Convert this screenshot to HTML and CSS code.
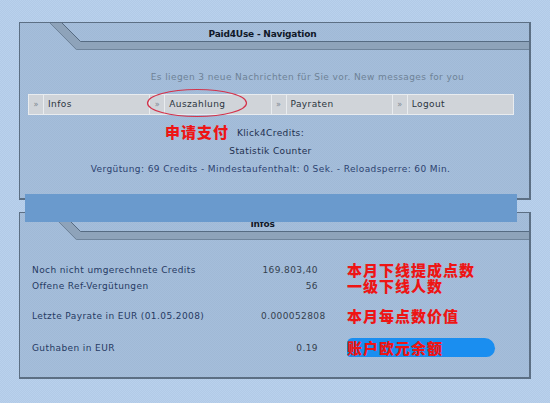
FILE: index.html
```html
<!DOCTYPE html>
<html lang="de">
<head>
    <meta charset="UTF-8">
    <title>Paid4Use - Navigation</title>
    <link rel="stylesheet" href="styles.css">
</head>
<body>

<div class="page">

    <div class="panel">
        <div class="panel-head">
            <svg class="head-slant" width="66" height="27" viewBox="0 0 66 27">
                <polygon points="30,0 42,0 60,18 66,18 66,27 56,27" fill="#8ea3ba"/>
                <polyline points="42,0 60.5,18.5 66,18.5" fill="none" stroke="#566b82"/>
                <polyline points="30,0 56.5,26.5 66,26.5" fill="none" stroke="#6f849b"/>
            </svg>
            <div class="head-main">
                <div class="head-title">Paid4Use - Navigation</div>
                <div class="head-band"></div>
            </div>
        </div>
        <div class="nav-body">
            <p class="msg">Es liegen 3 neue Nachrichten für Sie vor. New messages for you</p>
            <div class="nav">
                <div class="nav-item"><span class="nav-arrow">»</span><span class="nav-label">Infos</span></div>
                <div class="nav-item"><span class="nav-arrow">»</span><span class="nav-label">Auszahlung</span></div>
                <div class="nav-item"><span class="nav-arrow">»</span><span class="nav-label">Payraten</span></div>
                <div class="nav-item"><span class="nav-arrow">»</span><span class="nav-label">Logout</span></div>
            </div>
            <div class="stats">
                <div>Klick4Credits:</div>
                <div>Statistik Counter</div>
                <div class="stats-rule">Vergütung: 69 Credits - Mindestaufenthalt: 0 Sek. - Reloadsperre: 60 Min.</div>
            </div>
        </div>
    </div>

    <div class="panel panel-infos">
        <div class="panel-head">
            <svg class="head-slant" width="66" height="27" viewBox="0 0 66 27">
                <polygon points="30,0 42,0 60,18 66,18 66,27 56,27" fill="#8ea3ba"/>
                <polyline points="42,0 60.5,18.5 66,18.5" fill="none" stroke="#566b82"/>
                <polyline points="30,0 56.5,26.5 66,26.5" fill="none" stroke="#6f849b"/>
            </svg>
            <div class="head-main">
                <div class="head-title">Infos</div>
                <div class="head-band"></div>
            </div>
        </div>
        <div class="info-body">
            <span class="info-label">Noch nicht umgerechnete Credits</span>
            <span class="info-value">169.803,40</span>
            <span class="note note-pair">本月下线提成点数<br>一级下线人数</span>

            <span class="info-label">Offene Ref-Vergütungen</span>
            <span class="info-value">56</span>

            <span class="info-label row-end">Letzte Payrate in EUR (01.05.2008)</span>
            <span class="info-value row-end">0.000052808</span>
            <span class="note row-end">本月每点数价值</span>

            <span class="info-label row-end">Guthaben in EUR</span>
            <span class="info-value row-end">0.19</span>
            <span class="note row-end"><span class="note-brush">账户欧元余额</span></span>
        </div>
    </div>

    <!-- paint-over marks on the screenshot -->
    <svg class="circle-mark" width="104" height="32" viewBox="0 0 104 32">
        <ellipse cx="51" cy="15" rx="49.5" ry="13.5" fill="none" stroke="#d4324a" stroke-width="1.2"/>
    </svg>
    <div class="note note-pay">申请支付</div>
    <div class="cover-bar"></div>

</div>

</body>
</html>
```

FILE: styles.css
```css
body {
    margin: 0;
    background: #b9d1ed repeating-conic-gradient(#b2cae6 0 25%, transparent 0 50%) 0 0 / 2px 2px;
    font-family: "DejaVu Sans", Verdana, sans-serif;
    font-size: 9px;
    letter-spacing: 0.4px;
    color: #26395e;
}

.page {
    position: relative;
    width: 550px;
    height: 403px;
    padding: 22px 0 0 19px;
    box-sizing: border-box;
}

.panel {
    width: 509px;
    background: #a5bedb repeating-conic-gradient(#a0b9d6 0 25%, transparent 0 50%) 0 0 / 2px 2px;
    border: 1px solid #5c6f84;
    border-right-width: 2px;
    border-bottom-width: 2px;
}

.panel-infos {
    margin-top: 12px;
}

.panel-head {
    display: flex;
    height: 27px;
}

.head-slant {
    display: block;
    flex: none;
}

.head-main {
    flex: 1;
    display: flex;
    flex-direction: column;
}

.head-title {
    height: 18px;
    line-height: 23px;
    padding-right: 90px;
    text-align: center;
    font-weight: bold;
    letter-spacing: -0.2px;
    color: #101828;
}

.head-band {
    height: 7px;
    background: #8ea3ba;
    border-top: 1px solid #566b82;
    border-bottom: 1px solid #6f849b;
}

.nav-body {
    padding-bottom: 20px;
}

.msg {
    margin: 20px 0 0;
    padding-left: 66px;
    line-height: 14px;
    text-align: center;
    color: #6e8296;
}

.nav {
    display: flex;
    gap: 1px;
    margin: 10px 15px 0 8px;
    padding: 1px;
    background: #e9ecef;
    height: 19px;
}

.nav-item {
    flex: 1;
    display: flex;
    gap: 1px;
}

.nav-arrow, .nav-label {
    background: #d0d4d9;
    line-height: 19px;
    color: #2b3540;
}

.nav-arrow {
    width: 14px;
    text-align: center;
    font-size: 8px;
    letter-spacing: 0;
    color: #7d8792;
}

.nav-label {
    flex: 1;
    padding-left: 4px;
}

.stats {
    margin-top: 9px;
    padding-right: 8px;
    text-align: center;
    line-height: 18px;
    color: #1e2f4e;
}

.stats-rule {
    color: #2c4270;
}

.info-body {
    display: grid;
    grid-template-columns: 200px 57px auto;
    grid-template-rows: 16px 16px 30px 32px;
    column-gap: 29px;
    align-items: center;
    line-height: 16px;
    padding: 22px 0 21px 12px;
}

.row-end {
    align-self: end;
    height: 16px;
}

.info-label {
    color: #263a63;
}

.info-value {
    text-align: right;
    color: #343f4e;
}

.note {
    font-family: "Noto Sans CJK SC", sans-serif;
    font-size: 15px;
    font-weight: 900;
    letter-spacing: 1px;
    line-height: 16px;
    color: #ee1515;
    white-space: nowrap;
}

.note-pair {
    grid-row: span 2;
}

.note-brush {
    display: inline-block;
    line-height: 19px;
    margin-top: -2px;
    padding-right: 52px;
    background: #1a8ef0;
    border-radius: 6px 12px 10px 4px;
}

.note-pay {
    position: absolute;
    left: 165px;
    top: 124px;
}

.circle-mark {
    position: absolute;
    left: 146px;
    top: 88px;
}

.cover-bar {
    position: absolute;
    left: 25px;
    top: 194px;
    width: 492px;
    height: 28px;
    background: #6a9acd;
}
```
